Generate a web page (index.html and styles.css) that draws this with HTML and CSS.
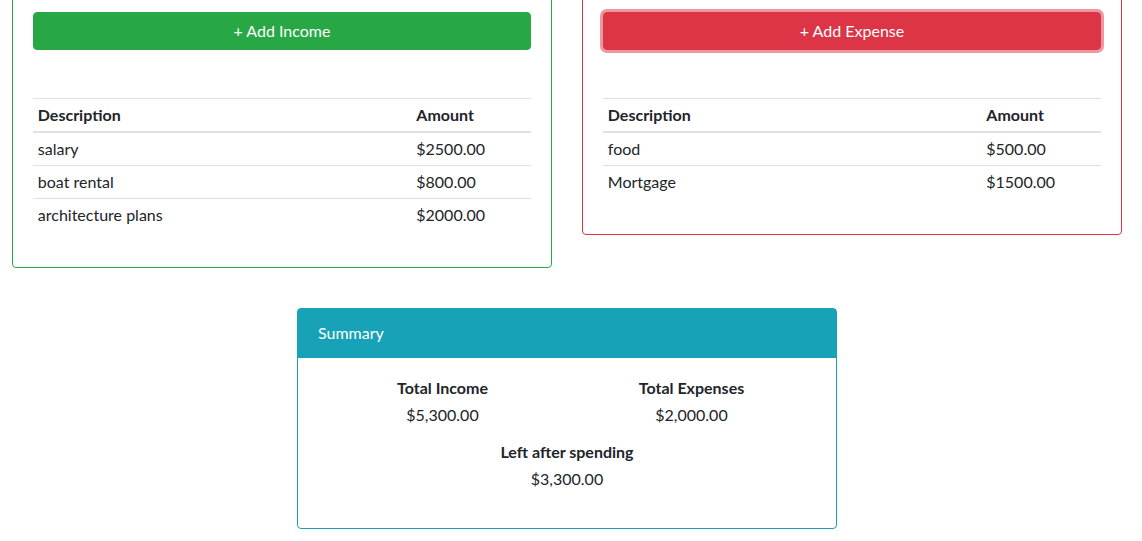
FILE: index.html
```html
<!DOCTYPE html>
<html>
<head>
<meta charset="utf-8">
<link rel="stylesheet" href="styles.css">
</head>
<body>
<div class="page">
  <div class="cols">
    <div class="card card-income">
      <div class="card-body">
        <button class="btn btn-income">+ Add Income</button>
        <table class="tbl">
          <thead>
            <tr><th>Description</th><th class="amt">Amount</th></tr>
          </thead>
          <tbody>
            <tr><td>salary</td><td>$2500.00</td></tr>
            <tr><td>boat rental</td><td>$800.00</td></tr>
            <tr><td>architecture plans</td><td>$2000.00</td></tr>
          </tbody>
        </table>
      </div>
    </div>
    <div class="card card-expense">
      <div class="card-body">
        <button class="btn btn-expense">+ Add Expense</button>
        <table class="tbl">
          <thead>
            <tr><th>Description</th><th class="amt">Amount</th></tr>
          </thead>
          <tbody>
            <tr><td>food</td><td>$500.00</td></tr>
            <tr><td>Mortgage</td><td>$1500.00</td></tr>
          </tbody>
        </table>
      </div>
    </div>
  </div>
  <div class="card card-summary">
    <div class="summary-header">Summary</div>
    <div class="card-body summary-body">
      <div class="summary-grid">
        <div class="stat">
          <h6 class="stat-label">Total Income</h6>
          <p class="stat-value">$5,300.00</p>
        </div>
        <div class="stat">
          <h6 class="stat-label">Total Expenses</h6>
          <p class="stat-value">$2,000.00</p>
        </div>
        <div class="stat stat-full">
          <h6 class="stat-label">Left after spending</h6>
          <p class="stat-value">$3,300.00</p>
        </div>
      </div>
    </div>
  </div>
</div>
</body>
</html>
```

FILE: styles.css
```css
* { box-sizing: border-box; }
html, body { margin: 0; padding: 0; background: #fff; }
body {
  font-family: "Lato", "Noto Sans", sans-serif;
  font-size: 16px;
  line-height: 24px;
  color: #212529;
}
.page {
  padding: 0 20px 0 12px;
  margin-top: -9px;
}
.cols {
  display: flex;
  gap: 30px;
  align-items: flex-start;
}
.card {
  width: 540px;
  border: 1px solid;
  border-radius: 4px;
  background: #fff;
}
.card-income { border-color: #28a745; }
.card-expense { border-color: #dc3545; }
.card-body { padding: 20px; }
.btn {
  display: block;
  width: 100%;
  height: 38px;
  padding: 6px 12px;
  border: 1px solid;
  border-radius: 4px;
  font-family: inherit;
  font-size: 16px;
  line-height: 24px;
  color: #fff;
  margin: 0 0 48px 0;
  text-align: center;
}
.btn-income { background: #28a745; border-color: #28a745; }
.btn-expense {
  background: #dc3545;
  border-color: #dc3545;
  box-shadow: 0 0 0 3px rgba(225, 83, 97, 0.6);
}
.tbl {
  width: 100%;
  border-collapse: collapse;
  margin-bottom: 16px;
}
.tbl th, .tbl td {
  padding: 4px 4.8px;
  text-align: left;
  border-top: 1px solid #dee2e6;
  vertical-align: top;
}
.tbl th { font-weight: 700; }
.tbl thead th { border-bottom: 2px solid #dee2e6; }
.tbl .amt { width: 24%; }
.card-summary {
  margin: 40px auto 0;
  border-color: #17a2b8;
}
.summary-header {
  background: #17a2b8;
  color: #fff;
  padding: 12px 20px;
  line-height: 24px;
  border-bottom: 1px solid #17a2b8;
}
.summary-grid {
  display: grid;
  grid-template-columns: 1fr 1fr;
  text-align: center;
}
.stat-full { grid-column: 1 / span 2; }
.stat-label {
  margin: 0 0 6px;
  font-size: 16px;
  line-height: 19px;
  font-weight: 700;
}
.stat-value {
  margin: 0 0 15px;
  line-height: 24px;
}
.stat-full .stat-value { margin-bottom: 17px; }
```
